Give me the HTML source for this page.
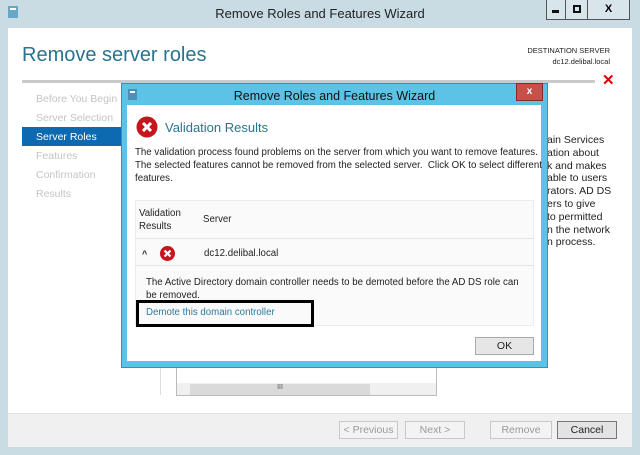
<!DOCTYPE html>
<html><head><style>
*{margin:0;padding:0;box-sizing:border-box}
body{width:640px;height:455px;overflow:hidden;background:#c9dce4;font-family:"Liberation Sans",sans-serif;position:relative}
.a{position:absolute}
.t{font-size:10.5px;color:#222;white-space:nowrap}
.d{font-size:9.7px}
.nav{font-size:10.5px;color:#c4c4c4;left:36px}
.btn{position:absolute;height:18px;border:1px solid #c8c8c8;background:#f3f3f3;font-size:10.5px;color:#9a9a9a;text-align:center;line-height:16px}
</style></head><body>
<div class="a" style="left:8px;top:6px;width:10px;height:12px;background:#6aa6c8"></div>
<div class="a" style="left:10px;top:8px;width:6px;height:2px;background:#fff"></div>
<div class="a t" style="left:0;width:640px;text-align:center;top:6px;font-size:13px;color:#222">Remove Roles and Features Wizard</div>
<div class="a" style="left:546px;top:0;width:20px;height:20px;border:1px solid #555;border-top:0;background:#d8e6ec"></div>
<div class="a" style="left:552px;top:10px;width:7px;height:3px;background:#111"></div>
<div class="a" style="left:566px;top:0;width:22px;height:20px;border:1px solid #555;border-top:0;border-left:0;background:#d8e6ec"></div>
<div class="a" style="left:573px;top:5px;width:8px;height:8px;border:2px solid #111"></div>
<div class="a" style="left:588px;top:0;width:42px;height:20px;border:1px solid #555;border-top:0;border-left:0;background:#d8e6ec;font-size:11px;font-weight:bold;text-align:center;line-height:18px">X</div>
<div class="a" style="left:8px;top:28px;width:624px;height:385px;background:#fff"></div>
<div class="a" style="left:8px;top:413px;width:624px;height:34px;background:#f0f0f0;border-top:1px solid #e2e2e2"></div>
<div class="a t" style="left:22px;top:44px;font-size:20px;color:#2a7390">Remove server roles</div>
<div class="a t" style="right:30px;top:45px;font-size:7.5px;text-align:right;line-height:11px">DESTINATION SERVER<br>dc12.delibal.local</div>
<div class="a" style="left:22px;top:80px;width:573px;height:3px;background:#cacaca"></div>
<div class="a" style="left:602px;top:71px;font-size:15px;font-weight:bold;color:#e00000">✕</div>
<div class="a t nav" style="top:93px">Before You Begin</div>
<div class="a t nav" style="top:112px">Server Selection</div>
<div class="a" style="left:22px;top:127px;width:100px;height:19px;background:#0d69b0"></div>
<div class="a t nav" style="top:131px;color:#fff">Server Roles</div>
<div class="a t nav" style="top:150px">Features</div>
<div class="a t nav" style="top:169px">Confirmation</div>
<div class="a t nav" style="top:188px">Results</div>
<div class="a t" style="left:547px;top:134px;line-height:12.8px">ain Services<br>ation about<br>k and makes<br>able to users<br>rators. AD DS<br>ers to give<br>to permitted<br>n the network<br>n process.</div>
<div class="a" style="left:176px;top:362px;width:261px;height:34px;border:1px solid #bbb;background:#fff"></div>
<div class="a" style="left:177px;top:383px;width:259px;height:12px;background:#f0f0f0"></div>
<div class="a" style="left:190px;top:384px;width:180px;height:11px;background:#dadada;font-size:7px;text-align:center;color:#555">III</div>
<div class="a" style="left:160px;top:360px;width:1px;height:35px;background:#ddd"></div>
<div class="btn" style="left:339px;top:421px;width:59px">&lt; Previous</div>
<div class="btn" style="left:405px;top:421px;width:60px">Next &gt;</div>
<div class="btn" style="left:490px;top:421px;width:62px">Remove</div>
<div class="btn" style="left:557px;top:421px;width:60px;border-color:#777;background:#e3e3e3;color:#222">Cancel</div>
<div class="a" style="left:121px;top:83px;width:427px;height:285px;background:#5cc3e6;border:1px solid #3a8fb8"></div>
<div class="a" style="left:128px;top:89px;width:9px;height:11px;background:#4e8fb8"></div>
<div class="a" style="left:130px;top:91px;width:5px;height:2px;background:#fff"></div>
<div class="a t" style="left:121px;width:427px;text-align:center;top:89px;font-size:12.5px;color:#111">Remove Roles and Features Wizard</div>
<div class="a" style="left:516px;top:83px;width:27px;height:18px;background:#c7504a;border:1px solid #8a2a26;color:#fff;font-size:10px;font-weight:bold;text-align:center;line-height:15px">x</div>
<div class="a" style="left:127px;top:105px;width:414px;height:256px;background:#fff"></div>
<svg class="a" style="left:136px;top:116px" width="22" height="22"><circle cx="11" cy="11" r="10.5" fill="#c4161c"/><path d="M7 7L15 15M15 7L7 15" stroke="#fff" stroke-width="3"/></svg>
<div class="a t" style="left:165px;top:120px;font-size:13px;color:#2a7390">Validation Results</div>
<div class="a t d" style="left:135px;top:146px;line-height:13px">The validation process found problems on the server from which you want to remove features.<br>The selected features cannot be removed from the selected server.&nbsp; Click OK to select different<br>features.</div>
<div class="a" style="left:135px;top:200px;width:399px;height:126px;background:#fafafa;border:1px solid #ececec"></div>
<div class="a t d" style="left:139px;top:207px;line-height:13px">Validation<br>Results</div>
<div class="a t d" style="left:203px;top:214px">Server</div>
<div class="a" style="left:135px;top:238px;width:399px;height:1px;background:#e6e6e6"></div>
<div class="a t" style="left:142px;top:249px;font-size:9px;font-weight:bold">^</div>
<svg class="a" style="left:160px;top:246px" width="15" height="15"><circle cx="7.5" cy="7.5" r="7.5" fill="#c4161c"/><path d="M4.5 4.5L10.5 10.5M10.5 4.5L4.5 10.5" stroke="#fff" stroke-width="2.2"/></svg>
<div class="a t d" style="left:204px;top:248px">dc12.delibal.local</div>
<div class="a" style="left:135px;top:265px;width:399px;height:1px;background:#e6e6e6"></div>
<div class="a t d" style="left:146px;top:276px;line-height:13px">The Active Directory domain controller needs to be demoted before the AD DS role can<br>be removed.</div>
<div class="a t d" style="left:146px;top:307px;color:#2a7ba0">Demote this domain controller</div>
<div class="a" style="left:136px;top:300px;width:178px;height:27px;border:3px solid #000"></div>
<div class="btn" style="left:475px;top:337px;width:59px;color:#222;border-color:#aaa;background:#e6e6e6">OK</div>
</body></html>
